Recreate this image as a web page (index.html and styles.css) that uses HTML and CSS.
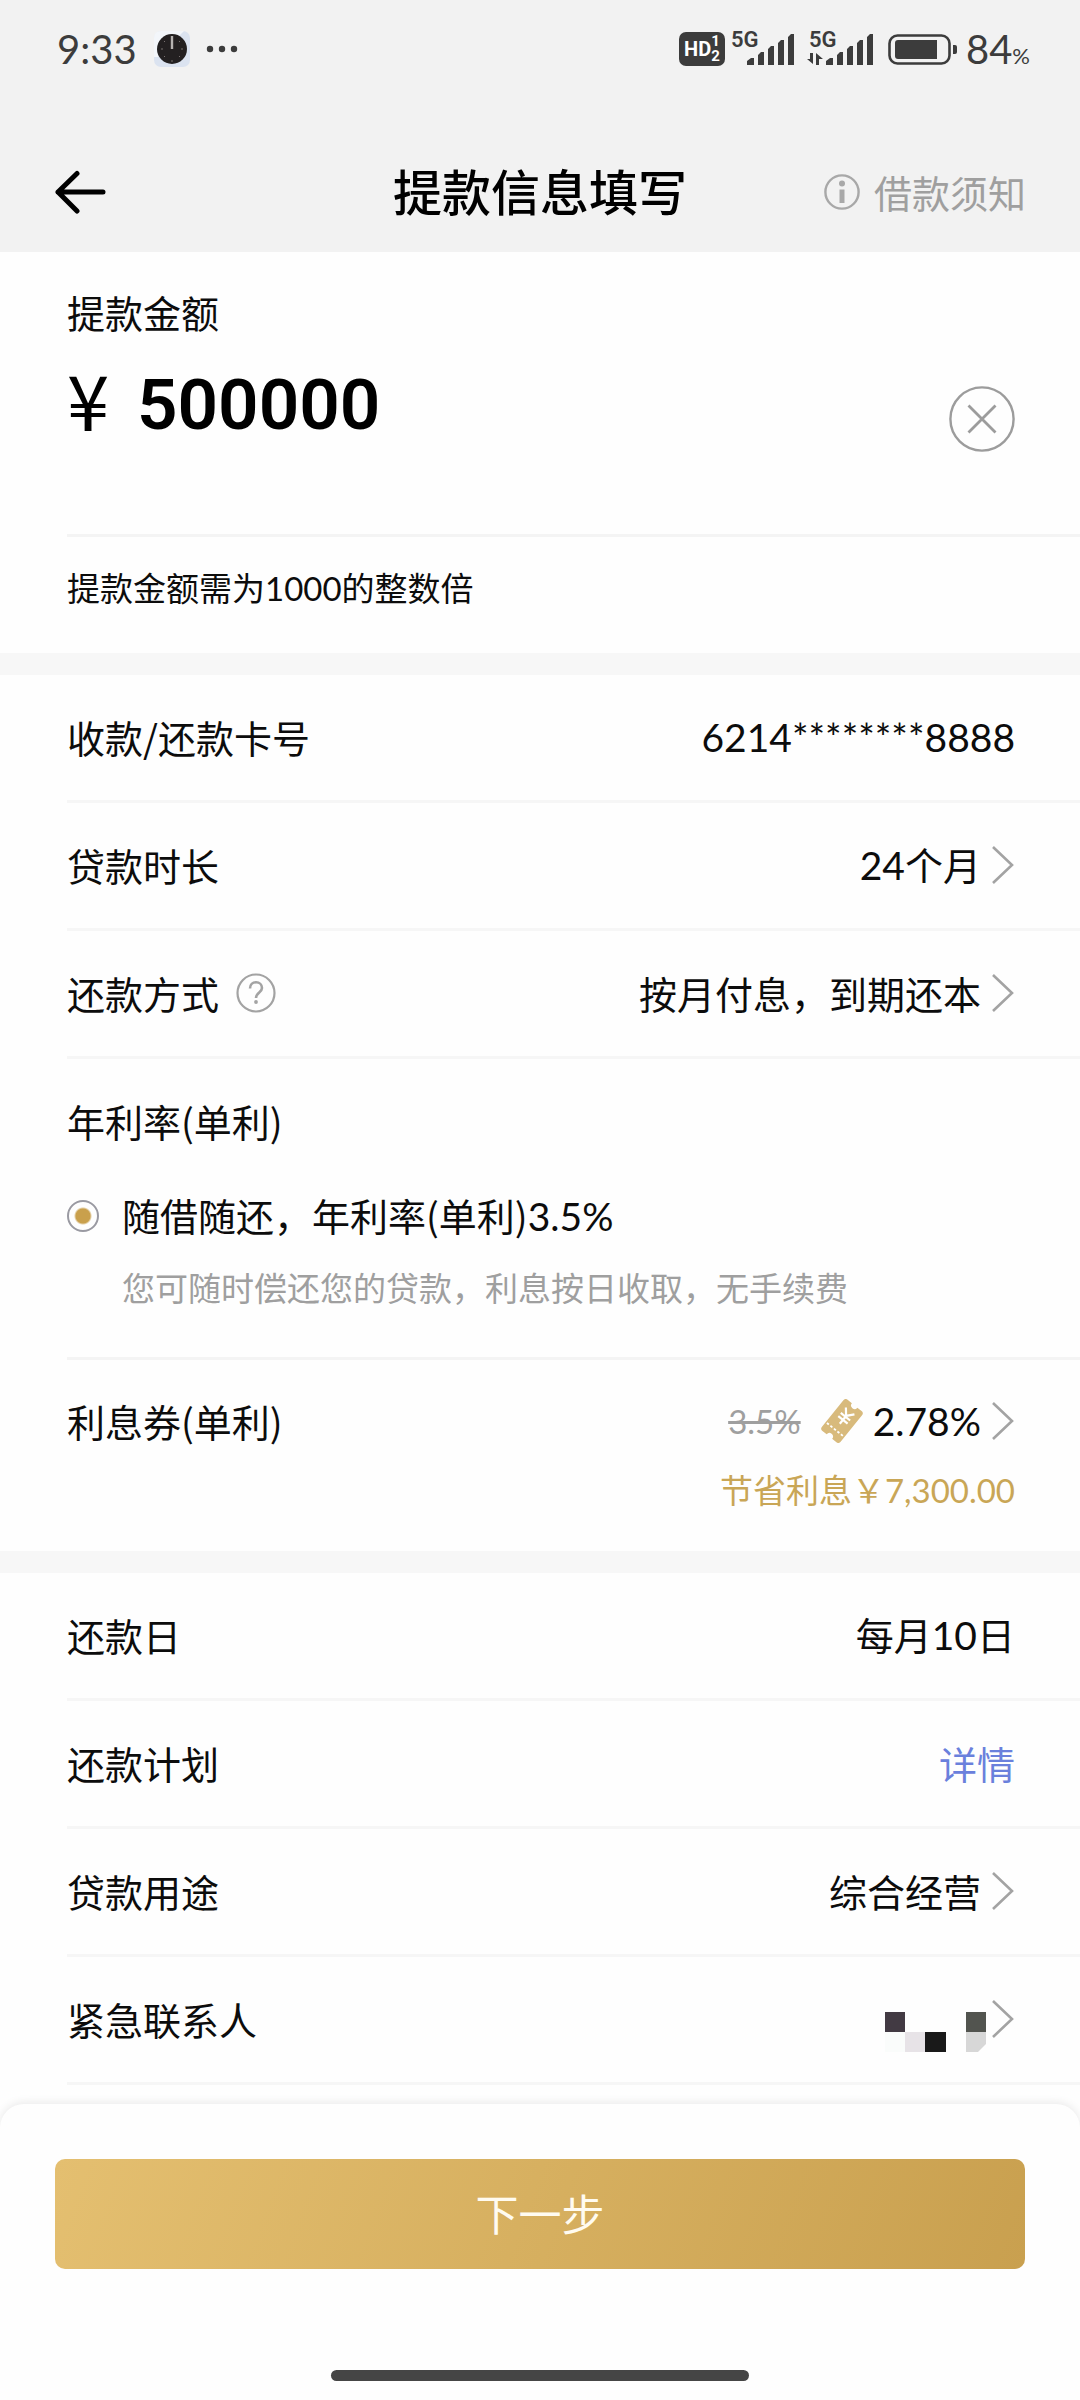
FILE: index.html
```html
<!DOCTYPE html>
<html lang="zh-CN">
<head>
<meta charset="utf-8">
<meta name="viewport" content="width=device-width, initial-scale=1">
<title>提款信息填写</title>
<link rel="stylesheet" href="styles.css">
</head>
<body>
<svg class="sprite" width="0" height="0" aria-hidden="true">
  <symbol id="chevron" viewBox="0 0 24 40"><path d="M2 2 21 20 2 38" fill="none" stroke="#a3a3a3" stroke-width="2.6"/></symbol>
  <symbol id="bars" viewBox="0 0 48 32">
    <path d="M0 31V27L4 24H7V31ZM11 31V21L14 18H17V31ZM21 31V15L24 12H27V31ZM31 31V9L34 6H37V31ZM41 31V3L44 0H47V31Z" fill="#3c3c3c"/>
  </symbol>
</svg>

<header class="top">
  <div class="status">
    <div class="status-left">
      <span class="clock">9:33</span>
      <svg width="36" height="36" viewBox="0 0 36 36" aria-hidden="true">
        <rect width="36" height="36" rx="7" fill="#dbe3f0"/>
        <path d="M0 7Q0 0 7 0H30L4 26H0Z" fill="#f3f6fa"/>
        <circle cx="18" cy="18" r="15" fill="#232021"/>
        <path d="M18 5V18" stroke="#b5b2b0" stroke-width="2.4"/>
        <path d="M7 18h2M27 18h2M18 29v2M10 10l1 1M26 10l-1 1M10 26l1-1M26 26l-1-1" stroke="#77706f"/>
      </svg>
      <svg width="32" height="8" viewBox="0 0 32 8" aria-hidden="true">
        <g fill="#3c3c3c"><circle cx="4" cy="4" r="3.2"/><circle cx="16" cy="4" r="3.2"/><circle cx="28" cy="4" r="3.2"/></g>
      </svg>
    </div>
    <div class="status-right">
      <span class="hd">HD<span class="hd-sim"><span>1</span><span>2</span></span></span>
      <span class="signal">
        <span class="net">5G</span>
        <svg class="signal-bars" width="48" height="32"><use href="#bars"/></svg>
      </span>
      <span class="signal">
        <span class="net">5G</span>
        <svg class="signal-data" width="16" height="12" viewBox="0 0 16 12" aria-hidden="true"><path d="M6 0V11L0 6H3V0ZM9 12V0L16 6H12V12Z" fill="#3c3c3c"/></svg>
        <svg class="signal-bars" width="48" height="32"><use href="#bars"/></svg>
      </span>
      <svg class="battery" width="70" height="32" viewBox="0 0 70 32" aria-hidden="true">
        <rect x="1.5" y="2.5" width="60" height="28" rx="8" fill="none" stroke="#3c3c3c" stroke-width="2.6"/>
        <path d="M10 7H49V26H10Q7 26 7 23V10Q7 7 10 7Z" fill="#3c3c3c"/>
        <path d="M65 12H67Q69 12 69 14V19Q69 21 67 21H65Z" fill="#3c3c3c"/>
      </svg>
      <span class="percent">84<small>%</small></span>
    </div>
  </div>
  <nav class="nav">
    <button class="back" type="button" aria-label="返回">
      <svg width="52" height="44" viewBox="0 0 52 44"><path d="M49 22H4M23 3.500 4 22 23 41" fill="none" stroke="#000" stroke-width="5" stroke-linecap="round" stroke-linejoin="round"/></svg>
    </button>
    <h1>提款信息填写</h1>
    <a class="notice" href="#notice">
      <svg width="36" height="36" viewBox="0 0 36 36" aria-hidden="true"><circle cx="18" cy="18" r="16.6" fill="none" stroke="#a8a8a8" stroke-width="2.4"/><circle cx="18" cy="9.500" r="3" fill="#a8a8a8"/><path d="M18 15.500V29" stroke="#a8a8a8" stroke-width="5"/></svg>
      借款须知
    </a>
  </nav>
</header>

<main>
  <section class="amount">
    <label for="amount">提款金额</label>
    <div class="amount-row">
      <span class="yen">¥</span>
      <input id="amount" type="text" inputmode="numeric" value="500000">
      <button class="clear" type="button" aria-label="清除">
        <svg width="66" height="66" viewBox="0 0 66 66"><circle cx="33" cy="33" r="31.600" fill="none" stroke="#9c9c9c" stroke-width="2.4"/><path d="M19.500 19.500 46.500 46.500M46.500 19.500 19.500 46.500" stroke="#9c9c9c" stroke-width="2.8"/></svg>
      </button>
    </div>
    <p class="hint">提款金额需为<span>1000</span>的整数倍</p>
  </section>

  <section class="group">
    <div class="row"><span>收款/还款卡号</span><span class="value num">6214********8888</span></div>
    <div class="row"><span>贷款时长</span>
      <button class="value" type="button"><span><span class="num">24</span>个月</span><svg width="24" height="40"><use href="#chevron"/></svg></button></div>
    <div class="row">
      <span class="with-help">还款方式
        <button class="help" type="button" aria-label="还款方式说明">
          <svg width="40" height="40" viewBox="0 0 40 40"><circle cx="20" cy="20" r="18.500" fill="none" stroke="#a3a3a3" stroke-width="2.2"/><path d="M14 15.500C14 11.500 16.600 9.300 20 9.300S26 11.500 26 15C26 19.500 20 19.500 20 25" fill="none" stroke="#a3a3a3" stroke-width="2.6"/><circle cx="20" cy="29" r="1.900" fill="#a3a3a3"/></svg>
        </button>
      </span>
      <button class="value" type="button"><span>按月付息，到期还本</span><svg width="24" height="40"><use href="#chevron"/></svg></button></div>
    <fieldset class="rate">
      <legend>年利率(单利)</legend>
      <div class="option">
        <input id="flex" type="radio" name="rate" checked>
        <label for="flex">随借随还，年利率(单利)<span class="num">3.5%</span></label>
        <p>您可随时偿还您的贷款，利息按日收取，无手续费</p>
      </div>
    </fieldset>
    <div class="row coupon">
      <span>利息券(单利)</span>
      <div class="coupon-value">
        <button class="value" type="button">
          <s>3.5%</s>
          <svg class="ticket" width="42" height="44" viewBox="0 0 42 44" aria-hidden="true">
            <g transform="rotate(39 21 22)">
              <path d="M12 2H17.500A3.500 3.500 0 0 0 24.500 2H30Q33 2 33 5V39Q33 42 30 42H24.500A3.500 3.500 0 0 0 17.500 42H12Q9 42 9 39V5Q9 2 12 2Z" fill="#d8ba7c"/>
              <path d="M15.500 9 21 15.500 26.500 9M21 15.500V25.500M15 16.500H27M15 20.500H27" fill="none" stroke="#fff" stroke-width="2.200"/>
              <path d="M10.500 33H32" stroke="#fff" stroke-width="1.800" stroke-dasharray="2.500 2"/>
            </g>
          </svg>
          <span class="num">2.78%</span>
          <svg width="24" height="40"><use href="#chevron"/></svg>
        </button>
        <p class="saving">节省利息￥<span>7,300.00</span></p>
      </div>
    </div>
  </section>

  <section class="group">
    <div class="row"><span>还款日</span><span class="value"><span>每月<span class="num">10</span>日</span></span></div>
    <div class="row"><span>还款计划</span><a class="value detail" href="#plan">详情</a></div>
    <div class="row"><span>贷款用途</span>
      <button class="value" type="button"><span>综合经营</span><svg width="24" height="40"><use href="#chevron"/></svg></button></div>
    <div class="row"><span>紧急联系人</span>
      <button class="value" type="button" aria-label="选择紧急联系人">
        <svg class="masked" width="101" height="66" viewBox="0 0 101 66"><path d="M0 26H20V46H0Z" fill="#423a43"/><path d="M0 46H20V66H0Z" fill="#fafcfb"/><path d="M20 46H40V66H20Z" fill="#e7e3e7"/><path d="M40 46H61V66H40Z" fill="#191919"/><path d="M81 26H101V46H81Z" fill="#52544f"/><path d="M81 46H101V58L93 66H81Z" fill="#d7d7d7"/></svg>
        <svg width="24" height="40"><use href="#chevron"/></svg>
      </button></div>
  </section>
</main>

<footer class="bottom">
  <button class="next" type="button">下一步</button>
  <div class="home"></div>
</footer>
</body>
</html>
```
FILE: styles.css
```css
* { box-sizing: border-box; }

body {
  margin: 0;
  min-height: 100vh;
  display: flex;
  flex-direction: column;
  background: #fefefe;
  color: #0c0c0c;
  font-family: "Noto Sans CJK SC", sans-serif;
  font-size: 38px;
  line-height: 48px;
}

button, input {
  margin: 0;
  padding: 0;
  border: 0;
  background: none;
  color: inherit;
  font: inherit;
}

button { cursor: pointer; }
a { color: inherit; text-decoration: none; }
p, h1 { margin: 0; }
svg { display: block; flex: none; }
.sprite { position: absolute; }

.num { font-family: Lato, "Noto Sans CJK SC", sans-serif; font-size: 39px; }

/* Status bar and title */
.top { background: #f2f2f2; }

.status {
  display: flex;
  justify-content: space-between;
  align-items: center;
  height: 98px;
  padding: 0 50px 0 57px;
  color: #3c3c3c;
  font-family: Lato, sans-serif;
}

.status-left, .status-right { display: flex; align-items: center; }
.clock { font-size: 40px; margin-right: 17px; }
.status-left svg + svg { margin-left: 16px; }

.hd {
  display: flex;
  align-items: center;
  justify-content: center;
  width: 46px;
  height: 34px;
  border-radius: 7px;
  background: #3c3c3c;
  color: #fff;
  font: 700 20px/34px Roboto, sans-serif;
}
.hd-sim { display: flex; flex-direction: column; font-size: 15px; line-height: 15px; }

.signal { position: relative; width: 64px; height: 34px; margin-left: 6px; }
.signal + .signal { width: 67px; margin-left: 12px; }
.net { position: absolute; left: 0; top: 0; font: 600 22px/16px Roboto, sans-serif; }
.signal + .signal .net { left: 2px; }
.signal-bars { position: absolute; right: 0; bottom: 0; }
.signal-data { position: absolute; left: 0; bottom: 1px; }
.battery { margin-left: 14px; }
.percent { margin-left: 8px; font-size: 40px; }
.percent small { font-size: 22px; line-height: 22px; }

.nav {
  display: grid;
  grid-template-columns: 1fr auto 1fr;
  align-items: center;
  height: 154px;
  padding: 34px 54px 0;
}
.back { justify-self: start; }
.nav h1 { padding-bottom: 4px; color: #000; font-size: 49px; font-weight: 500; line-height: 60px; }
.notice {
  justify-self: end;
  display: flex;
  align-items: center;
  gap: 14px;
  color: #9f9f9f;
}

/* Amount */
.amount { padding: 36px 0 0 67px; }
.amount > label { display: block; }
.amount-row {
  display: flex;
  height: 201px;
  padding: 24px 65px 0 0;
  border-bottom: 3px solid #f4f4f4;
  color: #000;
}
.yen { width: 70px; font-size: 76px; line-height: 76px; }
.amount-row input {
  flex: 1;
  min-width: 0;
  height: 90px;
  font: 600 71px/90px Roboto, sans-serif;
}
.clear { align-self: flex-start; margin-top: 26px; }
.hint { padding: 26px 0 41px; font-size: 33px; }
.hint span, .saving span { font-family: Lato, sans-serif; }

/* Rows */
.group { border-top: 22px solid #f7f7f7; }
.row {
  display: flex;
  justify-content: space-between;
  align-items: center;
  height: 128px;
  margin-left: 67px;
  padding: 0 65px 2px 0;
  border-bottom: 3px solid #f6f6f6;
}
.value { display: flex; align-items: center; gap: 10px; }
.with-help { display: flex; align-items: center; gap: 17px; }
.detail { color: #6a80dc; }
.masked { margin-right: -5px; }

.rate {
  min-width: 0;
  margin: 0 0 0 67px;
  padding: 0 65px 46px 0;
  border: 0;
  border-bottom: 3px solid #f4f4f4;
}
.rate legend { padding: 38px 0 0; }
.option {
  display: grid;
  grid-template-columns: 32px 1fr;
  column-gap: 23px;
  row-gap: 23px;
  align-items: center;
  padding-top: 46px;
}
.option input {
  appearance: none;
  width: 32px;
  height: 32px;
  border: 2px solid #9a9aa2;
  border-radius: 50%;
  background: radial-gradient(circle, #c9a04c 7px, transparent 9px);
}
.option p { grid-column: 2; color: #9f9f9f; font-size: 33px; }

.coupon {
  align-items: flex-start;
  height: 191px;
  padding-top: 37px;
  border-bottom: 0;
}
.coupon-value { display: flex; flex-direction: column; align-items: flex-end; gap: 20px; }
.coupon-value s { color: #9f9f9f; font-family: Lato, sans-serif; font-size: 33px; }
.ticket { margin-left: 10px; }
.saving { color: #c9a656; font-size: 33px; }

/* Bottom bar */
.bottom {
  margin-top: auto;
  padding: 55px 55px 19px;
  border-radius: 24px 24px 0 0;
  background: #fefefe;
  box-shadow: 0 -2px 8px rgba(0, 0, 0, 0.08);
}
.next {
  width: 100%;
  height: 110px;
  padding-bottom: 4px;
  border-radius: 10px;
  background: linear-gradient(110deg, #e4bf70, #c9a04f);
  color: #fffbf0;
  font-size: 43px;
}
.home {
  width: 43%;
  height: 11px;
  margin: 101px auto 0;
  border-radius: 6px;
  background: #454545;
}
```
